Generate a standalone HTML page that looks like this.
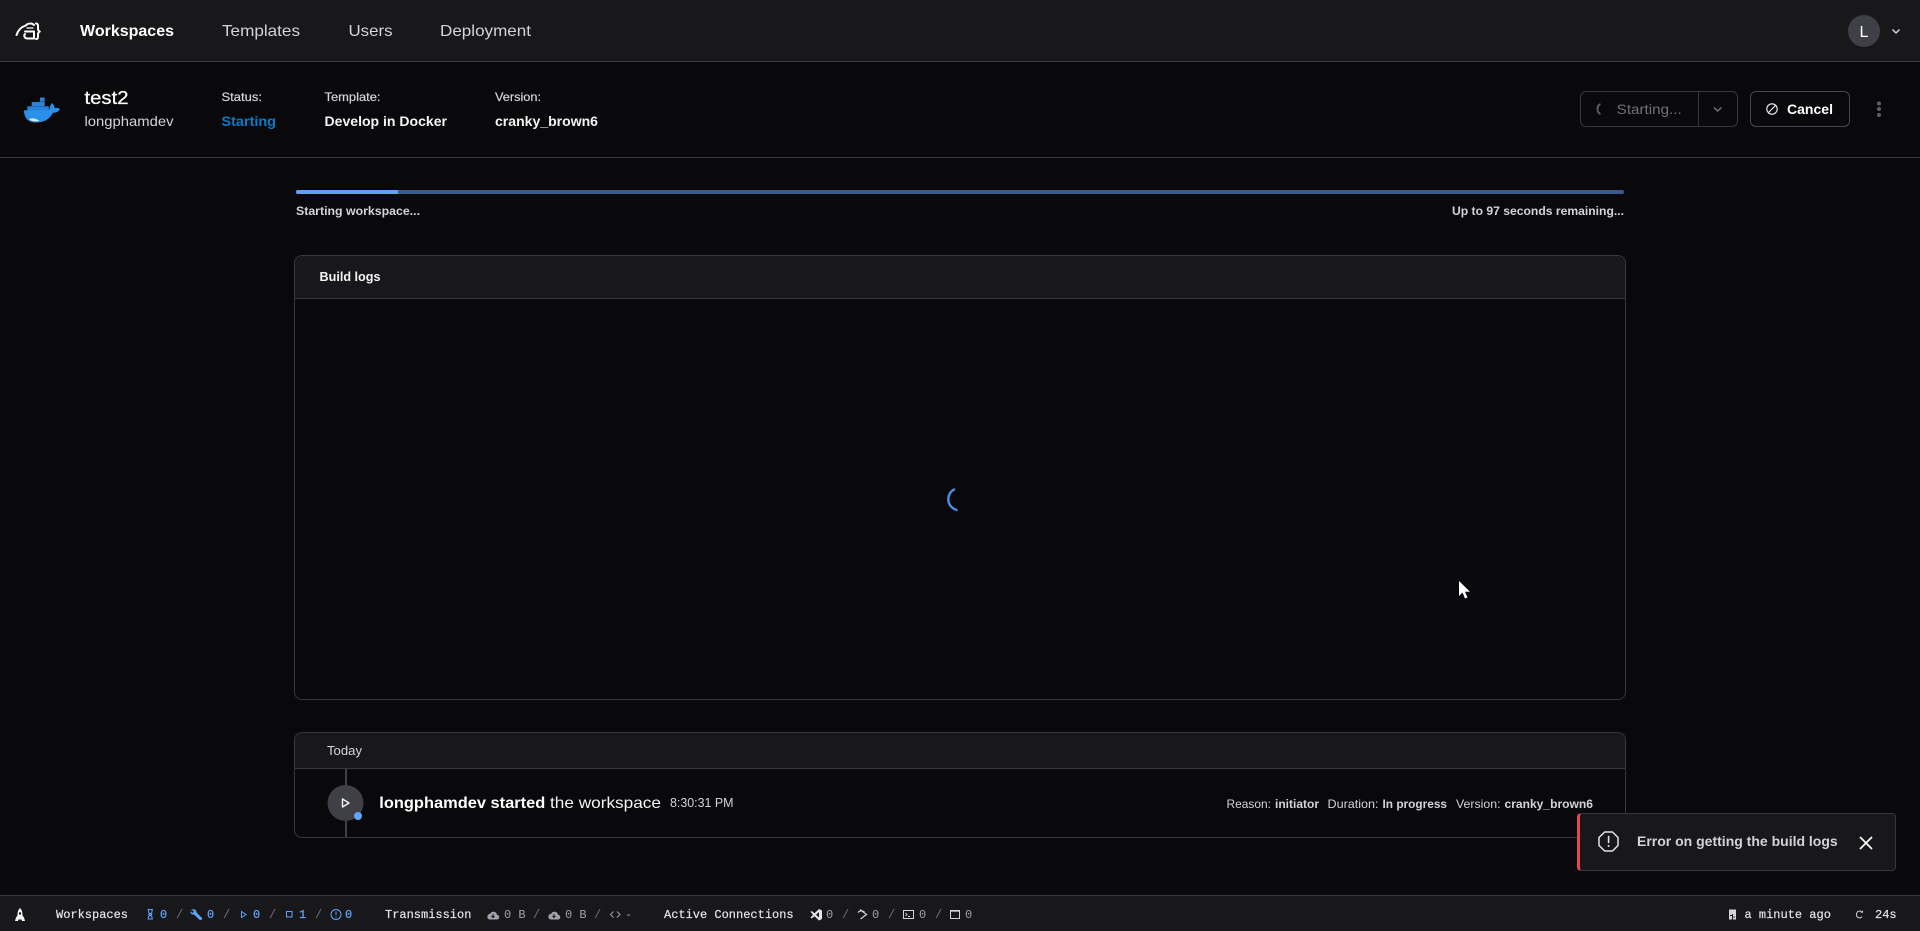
<!DOCTYPE html>
<html lang="en">
<head>
<meta charset="utf-8">
<title>test2 - Workspace</title>
<style>
html,body{margin:0;padding:0;width:1920px;height:931px;overflow:hidden;background:#09090b}
body{position:relative;font-family:"Liberation Sans",sans-serif}
.box{position:absolute;box-sizing:border-box}
svg.layer{position:absolute;left:0;top:0;width:1920px;height:931px}
text{font-family:"Liberation Sans",sans-serif;fill:#d4d4d8}
.b{font-weight:700}
.m{font-family:"Liberation Mono",monospace;font-size:12px;fill:#a1a1aa}
.w{fill:#e4e4e7;stroke:#e4e4e7;stroke-width:.2}
.bl{fill:#60a5fa;stroke:#60a5fa;stroke-width:.2}
.sl{fill:#71717a}
</style>
</head>
<body>
<div class="box" style="left:0;top:0;width:1920px;height:62px;background:#18181b;border-bottom:1px solid #3a3a40"></div>
<div class="box" style="left:0;top:157px;width:1920px;height:1px;background:#3a3a40"></div>

<div class="box" style="left:296px;top:190px;width:1328px;height:4px;background:#3b5a8c;border-radius:2px"></div>
<div class="box" style="left:296px;top:190px;width:102px;height:4px;background:#5f9ff5;border-radius:2px 0 0 2px"></div>

<div class="box" style="left:294px;top:255px;width:1332px;height:445px;border:1px solid #37373d;border-radius:8px;overflow:hidden">
  <div style="height:43px;box-sizing:border-box;background:#18181b;border-bottom:1px solid #37373d"></div>
</div>

<div class="box" style="left:294px;top:732px;width:1332px;height:106px;border:1px solid #37373d;border-radius:8px;overflow:hidden">
  <div style="height:36px;box-sizing:border-box;background:#18181b;border-bottom:1px solid #37373d"></div>
  <div style="position:absolute;left:50px;top:36px;width:2px;height:70px;background:#3f3f46"></div>
</div>

<div class="box" style="left:1580px;top:91px;width:158px;height:36px;border:1px solid #37373d;border-radius:6px"></div>
<div class="box" style="left:1698px;top:91px;width:1px;height:36px;background:#37373d"></div>
<div class="box" style="left:1750px;top:91px;width:100px;height:36px;border:1px solid #47474e;border-radius:6px"></div>

<div class="box" style="left:0;top:895px;width:1920px;height:36px;background:#18181b;border-top:1px solid #37373d"></div>

<div class="box" style="left:1577px;top:813px;width:319px;height:58px;background:#18181b;border:1px solid #37373d;border-left:3.500px solid #e5484d;border-radius:4px"></div>

<svg class="layer" viewBox="0 0 1920 931" xmlns="http://www.w3.org/2000/svg">
  <!-- logo -->
  <g fill="none" stroke="#fff" stroke-width="2" stroke-linecap="round" stroke-linejoin="round">
    <path d="M16.500 35C18 30.500 21.500 27 25.500 25.500"/>
    <path d="M26 25.500C27.500 23 32 23 34 25"/>
    <path d="M27 28H33" stroke-width="1.200"/>
    <path d="M25 31.500H34V38.500H27.500C24.500 38.500 23.500 35.500 25 34"/>
    <path d="M36 23.500C38.500 23.500 38 26 38 28.500C38 30 38.500 31 39.800 31.500C38.500 32 38 33 38 34.500C38 37 38.500 39 36 39"/>
  </g>
  <!-- nav -->
  <text class="b" x="80" y="36" font-size="16" textLength="94" lengthAdjust="spacingAndGlyphs" style="fill:#fff">Workspaces</text>
  <text x="222" y="36" font-size="16" textLength="78" lengthAdjust="spacingAndGlyphs">Templates</text>
  <text x="348.500" y="36" font-size="16" textLength="44" lengthAdjust="spacingAndGlyphs">Users</text>
  <text x="440" y="36" font-size="16" textLength="91" lengthAdjust="spacingAndGlyphs">Deployment</text>
  <circle cx="1864" cy="31" r="16" fill="#3f3f46"/>
  <text x="1859.500" y="37" font-size="16" style="fill:#fff">L</text>
  <path d="M1892.500 29.500L1896 33L1899.500 29.500" fill="none" stroke="#d4d4d8" stroke-width="1.500"/>

  <!-- docker -->
  <g fill="#2a82d8">
    <rect x="40" y="97.500" width="4.700" height="4.200"/>
    <rect x="31.700" y="102" width="13" height="4.200"/>
    <rect x="27.300" y="106.300" width="21.500" height="4.500"/>
  </g>
  <path d="M24 110.300H49C49.500 107 50.500 104.500 52 103C54 105 54.800 106.800 54.800 108.300C56.500 107.500 58.500 107.700 60 109C58.500 112 55.500 112.800 53 112.800C50 118.500 45 122.500 36 122.500C28 122.500 24 118 24 110.300Z" fill="#2b90ea"/>
  <path d="M29 119C32 117.800 36 118.300 39.500 120.800C36 122 31.500 121.500 29 119Z" fill="#dbe9f7"/>

  <!-- header -->
  <text x="84.500" y="104" font-size="18" textLength="44" lengthAdjust="spacingAndGlyphs" style="fill:#fff;stroke:#fff;stroke-width:.25">test2</text>
  <text x="84.500" y="126" font-size="14" textLength="89" lengthAdjust="spacingAndGlyphs">longphamdev</text>
  <text x="221.500" y="101" font-size="12" textLength="40.500" lengthAdjust="spacingAndGlyphs" style="stroke:#d4d4d8;stroke-width:.2">Status:</text>
  <text class="b" x="221.500" y="126" font-size="14" textLength="54.500" lengthAdjust="spacingAndGlyphs" style="fill:#0b7cc9">Starting</text>
  <text x="324.500" y="101" font-size="12" textLength="56" lengthAdjust="spacingAndGlyphs" style="stroke:#d4d4d8;stroke-width:.2">Template:</text>
  <text class="b" x="324.500" y="126" font-size="14" textLength="122.500" lengthAdjust="spacingAndGlyphs" style="fill:#f4f4f5">Develop in Docker</text>
  <text x="495" y="101" font-size="12" textLength="46" lengthAdjust="spacingAndGlyphs" style="stroke:#d4d4d8;stroke-width:.2">Version:</text>
  <text class="b" x="495" y="126" font-size="14" textLength="103" lengthAdjust="spacingAndGlyphs" style="fill:#f4f4f5">cranky_brown6</text>

  <!-- header actions -->
  <path d="M1600.500 104C1596.500 105.500 1596.500 112.500 1600.500 114" fill="none" stroke="#5f5f68" stroke-width="1.800"/>
  <text x="1616.700" y="114" font-size="14" textLength="65" lengthAdjust="spacingAndGlyphs" style="fill:#71717a">Starting...</text>
  <path d="M1714 107.500L1717.700 111L1721.500 107.500" fill="none" stroke="#71717a" stroke-width="1.500"/>
  <circle cx="1772" cy="109" r="5.200" fill="none" stroke="#f4f4f5" stroke-width="1.100"/>
  <path d="M1768.500 112.500L1775.500 105.500" stroke="#f4f4f5" stroke-width="1.100"/>
  <text class="b" x="1787" y="114" font-size="14" textLength="46" lengthAdjust="spacingAndGlyphs" style="fill:#fff">Cancel</text>
  <circle cx="1879" cy="103.500" r="2" fill="#5f5f68"/><circle cx="1879" cy="109" r="2" fill="#5f5f68"/><circle cx="1879" cy="115" r="2" fill="#5f5f68"/>

  <!-- progress labels -->
  <text class="b" x="296" y="215" font-size="12" textLength="124" lengthAdjust="spacingAndGlyphs">Starting workspace...</text>
  <text class="b" x="1452" y="215" font-size="12" textLength="172" lengthAdjust="spacingAndGlyphs">Up to 97 seconds remaining...</text>

  <!-- build logs -->
  <text class="b" x="319.500" y="281" font-size="13" textLength="61" lengthAdjust="spacingAndGlyphs" style="fill:#f4f4f5">Build logs</text>
  <path d="M954 489.500C946 494 946 506 956.500 510" fill="none" stroke="#4a90e8" stroke-width="2.400" stroke-linecap="round"/>

  <!-- timeline -->
  <text x="327" y="755" font-size="12.500" textLength="35" lengthAdjust="spacingAndGlyphs">Today</text>
  <circle cx="345.500" cy="803" r="18" fill="#3f3f46"/>
  <path d="M342.500 799L349 803L342.500 807Z" fill="none" stroke="#f4f4f5" stroke-width="1.400" stroke-linejoin="round"/>
  <circle cx="358" cy="816" r="4" fill="#60a5fa"/>
  <text class="b" x="379.300" y="808" font-size="16" textLength="166" lengthAdjust="spacingAndGlyphs" style="fill:#fff">longphamdev started</text>
  <text x="550" y="808" font-size="16" textLength="111" lengthAdjust="spacingAndGlyphs" style="fill:#f4f4f5">the workspace</text>
  <text x="670" y="807" font-size="13" textLength="63.500" lengthAdjust="spacingAndGlyphs">8:30:31 PM</text>
  <text x="1226.500" y="808" font-size="12" textLength="44.500" lengthAdjust="spacingAndGlyphs">Reason:</text>
  <text class="b" x="1275" y="808" font-size="12" textLength="44" lengthAdjust="spacingAndGlyphs">initiator</text>
  <text x="1327.500" y="808" font-size="12" textLength="51" lengthAdjust="spacingAndGlyphs">Duration:</text>
  <text class="b" x="1382.500" y="808" font-size="12" textLength="64.500" lengthAdjust="spacingAndGlyphs">In progress</text>
  <text x="1456" y="808" font-size="12" textLength="44.500" lengthAdjust="spacingAndGlyphs">Version:</text>
  <text class="b" x="1504.500" y="808" font-size="12" textLength="88.500" lengthAdjust="spacingAndGlyphs">cranky_brown6</text>

  <!-- toast -->
  <path d="M1604.700 832H1612.500L1618 837.500V845.500L1612.500 851H1604.700L1599 845.500V837.500Z" fill="none" stroke="#e4e4e7" stroke-width="1.500" stroke-linejoin="round"/>
  <path d="M1608.600 836.500V842.500" stroke="#e4e4e7" stroke-width="1.600" stroke-linecap="round"/>
  <circle cx="1608.600" cy="846" r="1" fill="#e4e4e7"/>
  <text class="b" x="1637" y="846" font-size="14" textLength="200.700" lengthAdjust="spacingAndGlyphs">Error on getting the build logs</text>
  <path d="M1860 837L1872 849M1872 837L1860 849" stroke="#fff" stroke-width="1.700"/>

  <!-- cursor -->
  <path d="M1459 581L1459 596L1462.500 592.500L1465 598.500L1467.500 597.500L1465 591.800H1470Z" fill="#fff"/>

  <!-- status bar left -->
  <path d="M20 908C22 910 22.500 912 22.500 915.500L24 917.500L25 921H22L21.500 919.500H18.500L18 921H15L16 917.500L17.500 915.500C17.500 912 18 910 20 908Z" fill="#f4f4f5"/>
  <circle cx="20" cy="913.500" r="1.200" fill="#18181b"/>
  <text class="m w" x="56" y="918">Workspaces</text>

  <path d="M147.500 909.500H153M147.500 919H153M148.500 910V912C148.500 913.500 152 914 152 914.500C152 915 148.500 915.500 148.500 917V919M152 910V912C152 913.500 148.500 914 148.500 914.500C148.500 915 152 915.500 152 917V919" fill="none" stroke="#60a5fa" stroke-width="1"/>
  <text class="m bl" x="160" y="918">0</text><text class="m sl" x="176" y="918">/</text>
  <path d="M190.500 911C191 909 194.500 908.500 196 910.500C196.500 911.500 196.500 912 196.500 912.500L202 918C202.500 919.500 201 920.500 199.500 919.800L194 914.500C192 914.800 190 913.500 190.500 911.500L192.800 913L194 911.500L192 910Z" fill="#60a5fa"/>
  <text class="m bl" x="207" y="918">0</text><text class="m sl" x="223" y="918">/</text>
  <path d="M241.500 911.500L246 914.500L241.500 917.500Z" fill="none" stroke="#60a5fa" stroke-width="1"/>
  <text class="m bl" x="253" y="918">0</text><text class="m sl" x="269" y="918">/</text>
  <rect x="286.500" y="911.500" width="5.500" height="5.500" fill="none" stroke="#60a5fa" stroke-width="1"/>
  <text class="m bl" x="299" y="918">1</text><text class="m sl" x="315" y="918">/</text>
  <circle cx="336" cy="914.500" r="5" fill="none" stroke="#60a5fa" stroke-width="1"/>
  <path d="M336 911.500V915M336 916.500V917.500" stroke="#60a5fa" stroke-width="1"/>
  <text class="m bl" x="345" y="918">0</text>
  <text class="m w" x="385" y="918">Transmission</text>

  <path d="M490 919.500H497C500 919.500 500 915 497 914.800C496.500 911 491 911 490.300 913.800C486.500 914 486.500 919.500 490 919.500Z" fill="#a1a1aa"/>
  <path d="M493 914V917.500M491.500 916L493 917.500L494.500 916" fill="none" stroke="#18181b" stroke-width="1"/>
  <text class="m" x="504" y="918" xml:space="preserve">0 B</text><text class="m sl" x="533" y="918">/</text>
  <path d="M551 919.500H558C561 919.500 561 915 558 914.800C557.500 911 552 911 551.300 913.800C547.500 914 547.500 919.500 551 919.500Z" fill="#a1a1aa"/>
  <path d="M554 914V917.500M552.500 916L554 917.500L555.500 916" fill="none" stroke="#18181b" stroke-width="1"/>
  <text class="m" x="565" y="918" xml:space="preserve">0 B</text><text class="m sl" x="594" y="918">/</text>
  <path d="M613.500 911.500L610.500 914.500L613.500 917.500M617 911.500L620 914.500L617 917.500" fill="none" stroke="#a1a1aa" stroke-width="1"/>
  <text class="m" x="625" y="918">-</text>
  <text class="m w" x="664" y="918">Active Connections</text>

  <path d="M819 909L822 910.500V919L819 920.500L814.500 916.300L811.700 918.500L810.500 917.800L813 914.800L810.500 911.800L811.700 911L814.500 913.300ZM819 912L816 914.800L819 917.500Z" fill="#e4e4e7" fill-rule="evenodd"/>
  <text class="m" x="826" y="918">0</text><text class="m sl" x="842" y="918">/</text>
  <path d="M860 909.500L866.500 914.500L860.500 919M858 912.500C859.500 910.500 863 910.500 864.500 912" fill="none" stroke="#d4d4d8" stroke-width="1.200"/>
  <text class="m" x="872" y="918">0</text><text class="m sl" x="888" y="918">/</text>
  <rect x="903.500" y="910.500" width="10" height="8" fill="none" stroke="#d4d4d8" stroke-width="1"/>
  <path d="M905.500 913L907 914.500L905.500 916M908 916.500H910" fill="none" stroke="#d4d4d8" stroke-width=".9"/>
  <text class="m" x="919" y="918">0</text><text class="m sl" x="935" y="918">/</text>
  <rect x="950.500" y="910.500" width="9" height="8" fill="none" stroke="#d4d4d8" stroke-width="1"/>
  <path d="M950.500 911H959.500" stroke="#d4d4d8" stroke-width="1.300"/>
  <text class="m" x="965" y="918">0</text>

  <!-- status bar right -->
  <rect x="1729" y="909.500" width="7" height="10" fill="#d4d4d8"/>
  <path d="M1732.500 914V919.500M1730 915.500H1732M1733.500 917H1735" stroke="#18181b" stroke-width="1"/>
  <text class="m w" x="1744.500" y="918">a minute ago</text>
  <path d="M1862 912.500C1860.500 909.800 1856.500 911 1856.500 914.500C1856.500 918 1860.500 919 1862 916.500" fill="none" stroke="#d4d4d8" stroke-width="1"/>
  <path d="M1860.500 912.800H1863V910.300Z" fill="#d4d4d8"/>
  <text class="m w" x="1875" y="918">24s</text>
</svg>
</body>
</html>
